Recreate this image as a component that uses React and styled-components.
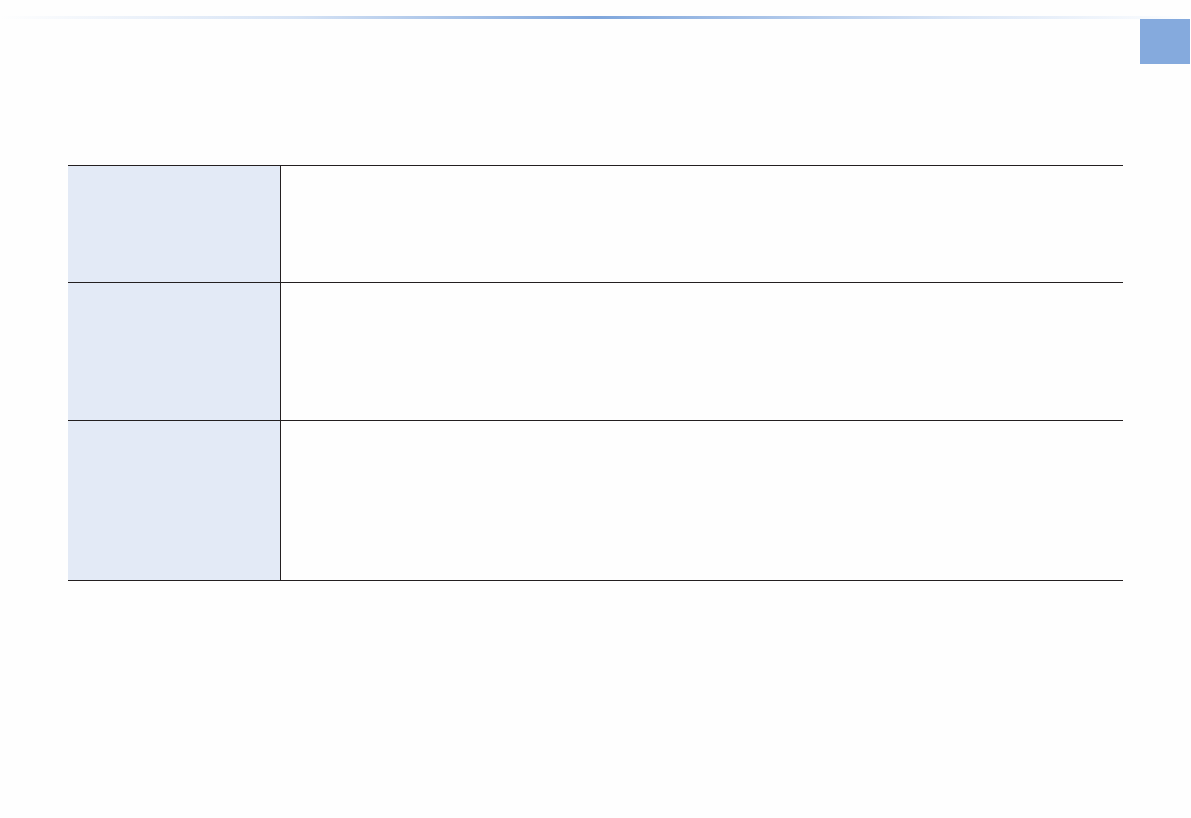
import React from "react";
import styled, { createGlobalStyle } from "styled-components";

const Global = createGlobalStyle`
  html, body { margin: 0; padding: 0; background: #ffffff; }
  body { font-family: "Liberation Sans", Arial, sans-serif; }
`;

const Page = styled.div`
  width: 1191px;
  height: 818px;
  background: #fefefe;
  overflow: hidden;
  padding-top: 16px;
  box-sizing: border-box;
`;

const AccentBar = styled.div`
  height: 3px;
  width: 100%;
  background: linear-gradient(
    to right,
    rgba(255, 255, 255, 0) 0%,
    #d6e3f5 25%,
    #7fa6dc 50%,
    #d9e5f6 80%,
    #f6f9fd 96%,
    #ffffff 100%
  );
`;

const MarkerRow = styled.div`
  display: flex;
  justify-content: flex-end;
  padding-right: 1px;
`;

const Marker = styled.div`
  width: 50px;
  height: 45px;
  background: #85aadd;
`;

const Table = styled.div`
  display: grid;
  grid-template-columns: 213px 1fr;
  width: 1055px;
  margin: 101px 0 0 68px;
  border-bottom: 1px solid #231f20;
`;

const LabelCell = styled.div`
  height: ${(p) => p.$h}px;
  background: #e3eaf6;
  border-top: 1px solid #231f20;
  border-right: 1px solid #231f20;
  box-sizing: border-box;
`;

const ValueCell = styled.div`
  height: ${(p) => p.$h}px;
  border-top: 1px solid #231f20;
  box-sizing: border-box;
`;

const rows = [117, 138, 160];

export default function App() {
  return (
    <>
      <Global />
      <Page>
        <AccentBar />
        <MarkerRow>
          <Marker />
        </MarkerRow>
        <Table>
          {rows.map((h, i) => (
            <React.Fragment key={i}>
              <LabelCell $h={h} />
              <ValueCell $h={h} />
            </React.Fragment>
          ))}
        </Table>
      </Page>
    </>
  );
}
